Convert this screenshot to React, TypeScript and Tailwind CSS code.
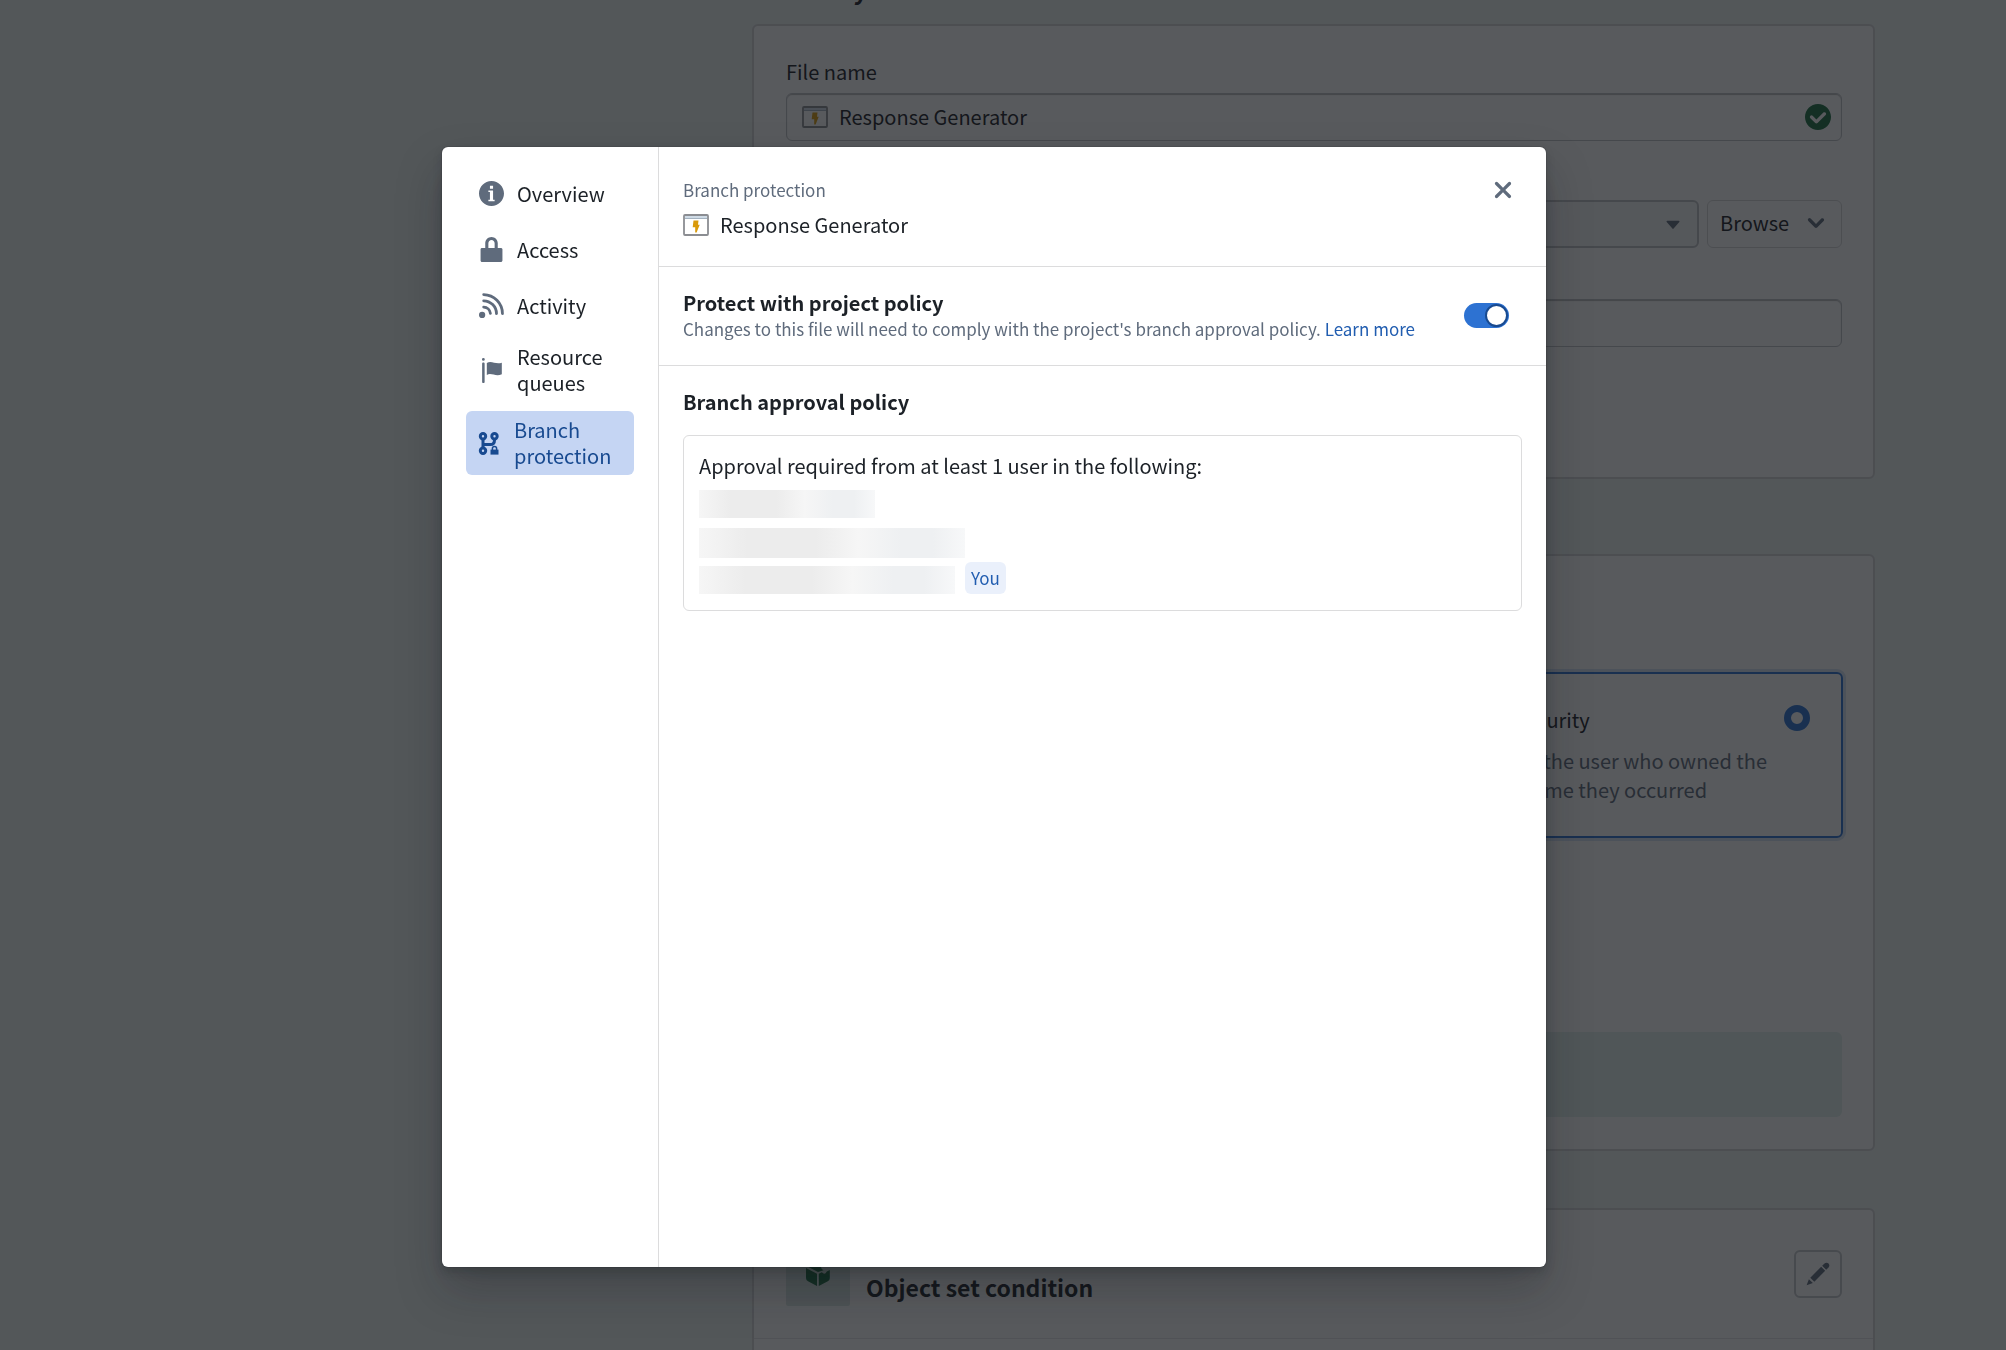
import type { ReactNode } from "react";

const Icon = ({ d, className }: { d: string; className?: string }) => (
  <svg viewBox="0 0 16 16" fill="currentColor" fillRule="evenodd" className={className} aria-hidden="true">
    <path d={d} />
  </svg>
);

const paths = {
  info: "M8 0C3.58 0 0 3.58 0 8s3.58 8 8 8 8-3.58 8-8-3.58-8-8-8zM7 3h2v2H7V3zm3 10H6v-1h1V7H6V6h3v6h1v1z",
  lock: "M13.96 7H12V3.95C12 1.77 10.21 0 8 0S4 1.77 4 3.95V7H1.96c-.55 0-.96.35-.96.9v7.1c0 .54.41 1 .96 1h12c.55 0 1.04-.46 1.04-1V7.9c0-.55-.49-.9-1.04-.9zM6 7V3.95c0-1.09.9-1.97 2-1.97s2 .88 2 1.97V7H6z",
  cross:
    "M9.41 8l3.29-3.29c.19-.18.3-.43.3-.71a1.003 1.003 0 0 0-1.71-.71L8 6.59l-3.29-3.3a1.003 1.003 0 0 0-1.42 1.42L6.59 8 3.3 11.29c-.19.18-.3.43-.3.71a1.003 1.003 0 0 0 1.71.71L8 9.41l3.29 3.29c.18.19.43.3.71.3a1.003 1.003 0 0 0 .71-1.71L9.41 8z",
  tickCircle:
    "M8 16c-4.42 0-8-3.58-8-8s3.58-8 8-8 8 3.58 8 8-3.58 8-8 8zm4-11c-.28 0-.53.11-.71.29L7 9.59l-2.29-2.3a1.003 1.003 0 0 0-1.42 1.42l3 3c.18.18.43.29.71.29s.53-.11.71-.29l5-5A1.003 1.003 0 0 0 12 5z",
  chevronDown:
    "M12 5c-.28 0-.53.11-.71.29L8 8.59l-3.29-3.3a1.003 1.003 0 0 0-1.42 1.42l4 4c.18.18.43.29.71.29s.53-.11.71-.29l4-4A1.003 1.003 0 0 0 12 5z",
  caretDown:
    "M12 6.5c0-.28-.22-.5-.5-.5h-7a.495.495 0 0 0-.37.83l3.5 4c.09.1.22.17.37.17s.28-.07.37-.17l3.5-4c.08-.09.13-.2.13-.33z",
  flag: "M2.8 0a.9.9 0 1 1 0 1.8.9.9 0 0 1 0-1.8zM2.8 2.8c.5 0 .8.3.8.7v11.8c0 .4-.3.7-.8.7s-.8-.3-.8-.7V3.5c0-.4.3-.7.8-.7zM5 3.2c3-1.9 5.7 1.3 9.6-.2v7.4c-3.9 1.9-6.6-1.3-9.6.4z",
  edit: "M3.25 10.26l2.47 2.47 6.69-6.69-2.46-2.48-6.7 6.7zM.99 14.99l3.86-1.39-2.46-2.44zM13.25 1c-.48 0-.92.2-1.24.51l-1.44 1.44 2.47 2.47 1.44-1.44c.32-.32.51-.75.51-1.24C15 1.78 14.21 1 13.25 1z",
};

const FeedIcon = () => (
  <svg viewBox="0 0 16 16" fill="none" stroke="currentColor" strokeWidth="1.8" strokeLinecap="round" className="size-[25px]" aria-hidden="true">
    <circle cx="2" cy="14" r="2" fill="currentColor" stroke="none" />
    <path d="M3 9a4.5 4.5 0 0 1 4.3 4M3 5a8.3 8.3 0 0 1 8.2 8.2M3 1a12.2 12.2 0 0 1 12 12.2" />
  </svg>
);

const BranchLockIcon = () => (
  <svg viewBox="0 0 20 23" fill="none" stroke="currentColor" strokeWidth="3" className="h-[23px] w-[22px]" aria-hidden="true">
    <circle cx="4" cy="4.3" r="2.7" />
    <circle cx="15.5" cy="4.3" r="2.7" />
    <circle cx="4" cy="18.7" r="2.7" />
    <path d="M4 7v9M4 12.6h7.5q4 0 4-4.6v-1" />
    <path d="M11.5 17.6h8v5h-8z" fill="currentColor" stroke="none" />
    <path d="M13.4 18v-1.4a2.1 2.1 0 0 1 4.2 0V18" strokeWidth="1.5" />
  </svg>
);

const AppIcon = () => (
  <svg viewBox="0 0 26 22" className="h-[22px] w-[26px] shrink-0" aria-hidden="true">
    <rect x="1" y="1" width="24" height="20" rx="1" fill="#fff" stroke="#8b8d92" strokeWidth="1.8" />
    <path d="M2 2h22v2.5H2z" fill="#cfdbe6" />
    <path d="M2 4.5h22" stroke="#a3b2c0" />
    <path d="M10.5 6.5h5l-.5 4.2h1.7L13.6 18.5h-1.4v-5.3H9.7z" fill="#d99a0b" />
  </svg>
);

const CubeIcon = () => (
  <svg viewBox="0 0 24 26" fill="currentColor" className="h-[26px] w-6" aria-hidden="true">
    <path d="M0 8l11 5.8V26L2 21.3Q0 20.2 0 18zM12.8 13.8l3-1.5q3 3.2 5-.8l3-1.4V18q0 2.2-2 3.3L12.8 26zM1 6.3L11 1l6 3.2q-4 4 .5 6L12 12z" />
  </svg>
);

const navItems: { label: string; icon: ReactNode; active?: boolean }[] = [
  { label: "Overview", icon: <Icon d={paths.info} className="size-[25px]" /> },
  { label: "Access", icon: <Icon d={paths.lock} className="size-[25px]" /> },
  { label: "Activity", icon: <FeedIcon /> },
  { label: "Resource queues", icon: <Icon d={paths.flag} className="size-[25px]" /> },
  { label: "Branch protection", icon: <BranchLockIcon />, active: true },
];

const Sidebar = () => (
  <nav className="w-[217px] shrink-0 border-r border-[#dcdcdd] px-6 pt-[23px]">
    <ul className="flex flex-col gap-[9px]">
      {navItems.map(({ label, icon, active }) => (
        <li key={label}>
          <button
            type="button"
            className={
              active
                ? "flex w-full items-center gap-[14px] rounded-md bg-[#c5d5f3] px-3 py-[6px] text-left text-[#184a90]"
                : "flex min-h-[47px] w-full items-center gap-[13px] rounded-md px-[13px] py-[6px] text-left"
            }
          >
            <span className={active ? "shrink-0" : "shrink-0 text-[#5f6b7c]"}>{icon}</span>
            {label}
          </button>
        </li>
      ))}
    </ul>
  </nav>
);

const redactedRow =
  "bg-[linear-gradient(to_right,#f6f6f6_0%,#ececec_18%,#ececec_44%,#f6f6f6_60%,#eef0f2_76%,#eef0f2_88%,#f7f8f9_100%)]";

const Dialog = () => (
  <div
    role="dialog"
    aria-modal="true"
    aria-labelledby="dialog-title"
    className="flex h-[1120px] w-[1104px] overflow-hidden rounded-md bg-white shadow-[0_0_0_1px_rgba(17,20,24,0.1),0_5px_10px_rgba(17,20,24,0.2),0_23px_46px_rgba(17,20,24,0.25)]"
  >
    <Sidebar />
    <div className="min-w-0 flex-1">
      <header className="flex h-[120px] items-start justify-between border-b border-[#dcdcdd] px-6 pt-[30px]">
        <div>
          <p className="text-[17px] text-[#5f6b7c]">Branch protection</p>
          <h2 id="dialog-title" className="mt-[9px] flex items-center gap-[11px]">
            <AppIcon />
            Response Generator
          </h2>
        </div>
        <button type="button" aria-label="Close" className="mr-[6px] text-[#5f6b7c]">
          <Icon d={paths.cross} className="size-[26px]" />
        </button>
      </header>

      <section className="flex h-[99px] items-center justify-between border-b border-[#dcdcdd] pr-[37px] pb-px pl-6">
        <div>
          <label htmlFor="protect" className="block font-bold">
            Protect with project policy
          </label>
          <p className="text-[17px] leading-[25px] text-[#5f6b7c]">
            Changes to this file will need to comply with the project's branch approval policy.{" "}
            <a href="#learn-more" className="text-[#215db0]">
              Learn more
            </a>
          </p>
        </div>
        <input
          id="protect"
          type="checkbox"
          role="switch"
          defaultChecked
          className="flex h-[25px] w-[45px] appearance-none items-center rounded-full bg-[#8f99a8] px-px before:size-[23px] before:rounded-full before:border-2 before:border-[#184a90] before:bg-white checked:justify-end checked:bg-[#2d72d2]"
        />
      </section>

      <section className="px-6 pt-[23px]">
        <h3 className="font-bold">Branch approval policy</h3>
        <div className="mt-5 rounded-md border border-[#dcdcdd] px-[15px] pt-[17px] pb-4">
          <p>Approval required from at least 1 user in the following:</p>
          <ul className="mt-[11px] flex flex-col">
            <li className={`h-7 w-44 ${redactedRow}`} />
            <li className={`mt-[10px] h-[30px] w-[266px] ${redactedRow}`} />
            <li className="mt-1 flex h-8 items-end gap-[10px]">
              <span className={`h-7 w-64 ${redactedRow}`} />
              <span className="flex h-8 items-center rounded-md bg-[#eaf0fb] px-[6px] text-[17px] text-[#215db0]">You</span>
            </li>
          </ul>
        </div>
      </section>
    </div>
  </div>
);

const card = "rounded-md border-2 border-[#d6d6d8] bg-white pr-[31px] pl-8";
const field = "h-12 w-full rounded-md border border-[#c0c2c6] bg-white shadow-[inset_0_1px_1px_rgba(17,20,24,0.3)]";

const Page = () => (
  <main className="pr-[131px] pl-[752px]">
    <h2 className="-mt-[29px] text-[24px] leading-[36px] font-bold">Summary</h2>

    <section className={`${card} mt-4 h-[455px] pt-[33px]`}>
      <label htmlFor="file-name" className="block">
        File name
      </label>
      <div className={`${field} mt-2 flex items-center gap-[11px] px-[15px]`}>
        <AppIcon />
        <input id="file-name" defaultValue="Response Generator" className="min-w-0 flex-1 bg-transparent outline-none" />
        <Icon d={paths.tickCircle} className="-mr-[5px] size-[26px] text-[#1c6e42]" />
      </div>

      <div className="mt-[59px] flex gap-2">
        <div className="relative flex-1">
          <select
            aria-label="Location"
            className="h-12 w-full appearance-none rounded-md border-2 border-[#c0c2c6] bg-[#f6f7f9] px-4"
          />
          <Icon d={paths.caretDown} className="pointer-events-none absolute top-[11px] right-[13px] size-[26px] text-[#5f6b7c]" />
        </div>
        <button type="button" className="flex h-12 w-[135px] items-center justify-between rounded-md border border-[#d6d6d8] px-3 pb-[2px]">
          Browse
          <Icon d={paths.chevronDown} className="size-[26px] text-[#5f6b7c]" />
        </button>
      </div>

      <input aria-label="Description" className={`${field} mt-[51px] px-4`} />
    </section>

    <section className={`${card} mt-[75px] h-[597px] pt-[116px]`}>
      <div className="-mr-px flex gap-4">
        <label className="flex h-[166px] flex-1 justify-between rounded-md border border-[#d6d6d8] p-8">
          Project security
          <input type="radio" name="security" className="size-[26px] appearance-none rounded-full border border-[#8f99a8]" />
        </label>
        <label className="flex h-[166px] flex-1 justify-between rounded-md border-2 border-[#2d72d2] pt-[31px] pr-[31px] pl-8 shadow-[0_0_0_3px_rgba(45,114,210,0.2)]">
          <span className="pt-[2px]">
            <span className="block">Action execution security</span>
            <span className="mt-[13px] block leading-[29px] text-[#5f6b7c]">
              Actions were run by the user who owned the
              <br />
              object at the exact time they occurred
            </span>
          </span>
          <input
            type="radio"
            name="security"
            defaultChecked
            className="size-[26px] shrink-0 appearance-none rounded-full border-[7px] border-[#2d72d2] bg-white"
          />
        </label>
      </div>
      <div className="mt-[194px] h-[85px] rounded-md bg-[#e3f0ed]" />
    </section>

    <section className={`${card} mt-[57px] h-[260px] pt-8`}>
      <div className="-mr-[31px] -ml-8 flex items-center gap-4 border-b border-[#e5e5e7] pr-[31px] pb-8 pl-8">
        <span className="flex size-16 items-center justify-center rounded-xs bg-[#d9e6e4] pb-[2px] text-[#1c6e42]">
          <CubeIcon />
        </span>
        <h3 className="flex-1 pt-[26px] text-[23px] leading-[32px] font-bold">Object set condition</h3>
        <button
          type="button"
          aria-label="Edit"
          className="flex size-12 items-center justify-center rounded-md border-2 border-[#c6c8cb] bg-white text-[#5f6b7c]"
        >
          <Icon d={paths.edit} className="size-[26px]" />
        </button>
      </div>
    </section>
  </main>
);

export default function App() {
  return (
    <div className="h-screen overflow-hidden bg-[#eef3f2] pt-px font-['Noto_Sans_CJK_SC','Source_Sans_Pro',sans-serif] text-[20px] leading-[26px] text-[#1c2127]">
      <Page />
      <div className="fixed inset-0 flex items-start justify-center overflow-hidden bg-[#111418]/70 pt-[147px] pr-[18px]">
        <Dialog />
      </div>
    </div>
  );
}
